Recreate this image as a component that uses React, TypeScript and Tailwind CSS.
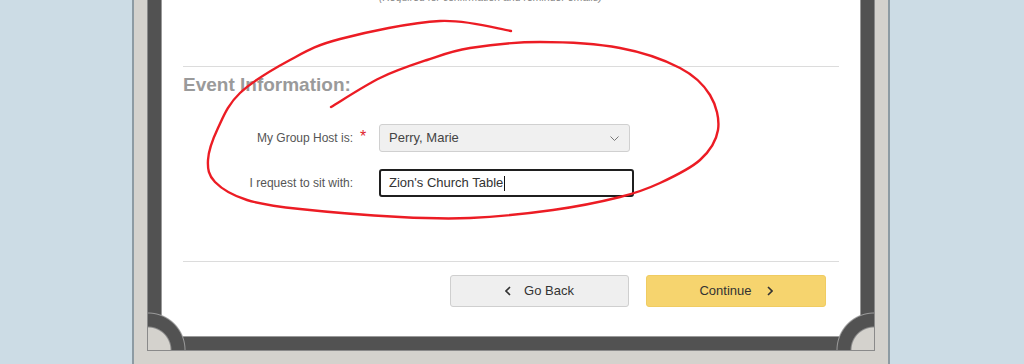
import React from 'react';

type Pt = [number, number];

// hand drawn red loop round the event fields (page coords)
const loop: Pt[] = [
  [511, 31], [440, 21], [340, 39], [290, 60], [240, 93], [218, 128], [208, 160],
  [215, 182], [247, 200], [300, 209], [400, 217], [470, 218], [553, 210], [620, 197],
  [660, 183], [700, 160], [718, 130], [710, 95], [680, 68], [620, 48], [540, 42],
  [470, 48], [427, 60], [380, 78], [331, 107],
];

const toPath = (p: Pt[]) => {
  let d = `M ${p[0][0]} ${p[0][1]}`;
  for (let i = 0; i < p.length - 1; i++) {
    const p0 = p[i - 1] || p[i];
    const p1 = p[i];
    const p2 = p[i + 1];
    const p3 = p[i + 2] || p[i + 1];
    const c1 = [p1[0] + (p2[0] - p0[0]) / 6, p1[1] + (p2[1] - p0[1]) / 6];
    const c2 = [p2[0] - (p3[0] - p1[0]) / 6, p2[1] - (p3[1] - p1[1]) / 6];
    d += ` C ${c1[0].toFixed(1)} ${c1[1].toFixed(1)}, ${c2[0].toFixed(1)} ${c2[1].toFixed(1)}, ${p2[0]} ${p2[1]}`;
  }
  return d;
};

const Chevron = ({ dir }: { dir: 'left' | 'right' }) => (
  <svg width="6" height="10" viewBox="0 0 6 10" className="shrink-0">
    <polyline
      points={dir === 'left' ? '5,1 1,5 5,9' : '1,1 5,5 1,9'}
      fill="none"
      stroke="#333"
      strokeWidth="1.6"
    />
  </svg>
);

const App = () => {
  return (
    <div
      className="relative h-[364px] overflow-hidden bg-[#ccdce5]"
      style={{ fontFamily: '"Liberation Sans", Arial, sans-serif' }}>
      <div className="ml-[132px] h-full w-[758px] border-x-2 border-[#8d9ba3] bg-[#d4d2cd] px-[13px] pb-[13px]">
        <div className="relative h-full overflow-hidden border-x border-b border-[#8a8a8a]">
          <div className="flow-root h-full border-x-[13px] border-b-[13px] border-[#525252]">
            <div className="flow-root h-full border-x border-b border-[#9a9a9a] bg-white px-[21px]">
              <div className="-mt-[9px] pl-[196px] text-[10.5px] italic leading-[13px] text-[#888]">
                (Required for confirmation and reminder emails)
              </div>

              <div className="mt-[62px] border-t border-[#dcdcdc]" />

              <h2 className="mt-[7px] text-[19px] font-bold leading-[22px] text-[#9a9a9a]">
                Event Information:
              </h2>

              <div className="mt-[28px] grid grid-cols-[170px_26px_1fr] items-center text-[12px] text-[#555]">
                <div className="text-right">My Group Host is:</div>
                <div className="-mt-[3px] pl-[7px] text-[16px] leading-none text-[#e0262b]">*</div>
                <div className="flex h-[28px] w-[251px] items-center justify-between rounded-[3px] border border-[#d0d0d0] bg-[#f0f0f0] pl-[9px] pr-[10px] text-[13px] text-[#444]">
                  <span>Perry, Marie</span>
                  <svg width="9" height="5" viewBox="0 0 9 5">
                    <polyline points="0.5,0.5 4.5,4.5 8.5,0.5" fill="none" stroke="#777" strokeWidth="1" />
                  </svg>
                </div>
              </div>

              <div className="mt-[17px] grid grid-cols-[170px_26px_1fr] items-center text-[12px] text-[#555]">
                <div className="text-right">I request to sit with:</div>
                <div />
                <div className="flex h-[28px] w-[255px] items-center rounded-[3px] border-2 border-[#1f1f1f] bg-white pl-[8px] text-[13px] text-[#333]">
                  <span>Zion's Church Table</span>
                  <span className="ml-px h-[15px] w-px bg-[#111]" />
                </div>
              </div>

              <div className="mt-[64px] border-t border-[#dcdcdc]" />

              <div className="mt-[13px] flex justify-end gap-[17px] pr-[13px] text-[13px] text-[#333]">
                <button
                  type="button"
                  className="flex h-[32px] w-[179px] items-center justify-center gap-[13px] rounded-[3px] border border-[#cfcfcf] bg-[#efefef]">
                  <Chevron dir="left" />
                  <span>Go Back</span>
                </button>
                <button
                  type="button"
                  className="flex h-[32px] w-[180px] items-center justify-center gap-[15px] rounded-[3px] border border-[#f0cc62] bg-[#f6d46e]">
                  <span>Continue</span>
                  <Chevron dir="right" />
                </button>
              </div>
            </div>
          </div>

          {/* notched corners */}
          <div className="absolute bottom-0 left-0 h-[40px] w-[40px] bg-[radial-gradient(circle_at_0_100%,#d4d2cd_22px,#8a8a8a_23px,#525252_24px,#525252_36px,#9a9a9a_37px,transparent_38px)]" />
          <div className="absolute bottom-0 right-0 h-[40px] w-[40px] bg-[radial-gradient(circle_at_100%_100%,#d4d2cd_22px,#8a8a8a_23px,#525252_24px,#525252_36px,#9a9a9a_37px,transparent_38px)]" />
        </div>
      </div>

      <svg
        className="pointer-events-none absolute inset-0"
        width="1024"
        height="364"
        viewBox="0 0 1024 364">
        <path d={toPath(loop)} fill="none" stroke="#ec1c24" strokeWidth="2.4" strokeLinecap="round" />
      </svg>
    </div>
  );
};

export default App;
